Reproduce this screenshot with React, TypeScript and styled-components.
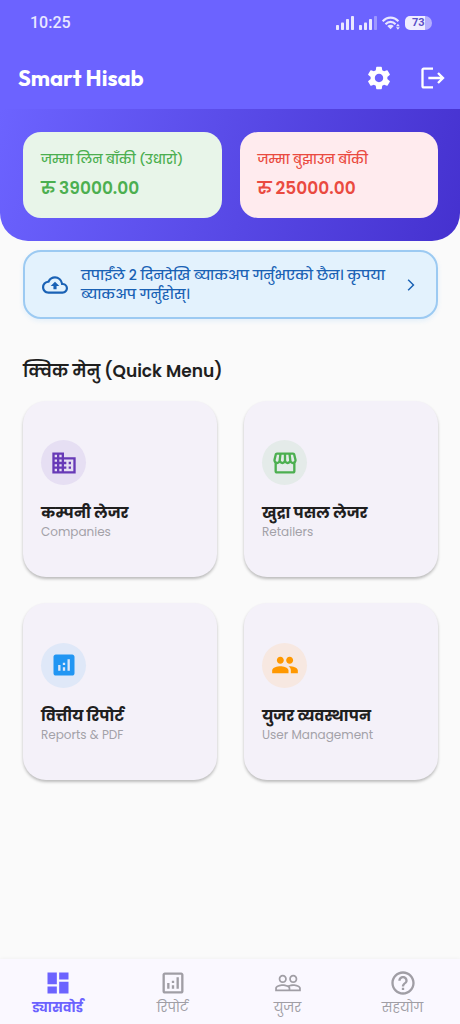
import React from "react";
import styled, { createGlobalStyle } from "styled-components";
import {
  MdAnalytics,
  MdArrowForwardIos,
  MdBusiness,
  MdDashboard,
  MdHelpOutline,
  MdLogout,
  MdOutlineAnalytics,
  MdOutlineBackup,
  MdOutlineStorefront,
  MdPeople,
  MdPeopleOutline,
  MdSettings,
} from "react-icons/md";

const GlobalStyle = createGlobalStyle`
  *, *::before, *::after { box-sizing: border-box; }
  body {
    margin: 0;
    background: #fafafa;
    font-family: Poppins, "Noto Sans", "Noto Sans Devanagari", sans-serif;
    color: #1f1f1f;
  }
  button { font: inherit; color: inherit; border: 0; padding: 0; cursor: pointer; }
  svg { display: block; flex: none; }
`;

const Page = styled.div`
  min-height: 100vh;
  display: flex;
  flex-direction: column;
`;

const TopArea = styled.header`
  background: #6c63ff;
  color: #fff;
`;

const StatusBar = styled.div`
  height: 46px;
  padding: 0 28px 0 30px;
  display: flex;
  align-items: center;
  justify-content: space-between;
  font: 500 16px/20px Roboto, sans-serif;
  color: #e9e7ff;
`;

const StatusIcons = styled.div`
  display: flex;
  align-items: center;
  gap: 5px;
`;

const Battery = styled.span`
  width: 27px;
  height: 14px;
  border-radius: 5px 7px 7px 5px;
  background: linear-gradient(90deg, #efedff 20px, #b4aeff 20px);
  color: #5a50c8;
  font: 700 11px/14px Roboto, sans-serif;
  padding-left: 7px;
`;

const AppBar = styled.div`
  height: 63px;
  padding: 0 13px 0 18px;
  display: flex;
  align-items: center;
  justify-content: space-between;
`;

const AppTitle = styled.h1`
  margin: 0;
  font: 700 22px/28px Outfit, Lato, sans-serif;
`;

const Actions = styled.div`
  display: flex;
  gap: 26px;
`;

const IconButton = styled.button`
  background: none;
`;

const Summary = styled.section`
  display: grid;
  grid-template-columns: 1fr 1fr;
  gap: 18px;
  padding: 23px 22px 23px 23px;
  border-radius: 0 0 28px 28px;
  background: linear-gradient(106deg, #6c63ff, #4531cf);
`;

const Balance = styled.div<{ $bg: string; $fg: string }>`
  height: 86px;
  padding: 17px 18px;
  border-radius: 18px;
  background: ${(p) => p.$bg};
  color: ${(p) => p.$fg};
`;

const BalanceLabel = styled.div`
  font-size: 13px;
  font-weight: 500;
  line-height: 22px;
  white-space: nowrap;
`;

const BalanceValue = styled.div`
  margin-top: 4px;
  font-size: 17px;
  font-weight: 600;
  line-height: 26px;
`;

const Main = styled.main`
  flex: 1;
  padding: 9px 22px 24px 23px;
`;

const Notice = styled.button`
  width: 100%;
  display: flex;
  align-items: center;
  gap: 13px;
  min-height: 69px;
  padding: 0 18px 0 17px;
  border: 2px solid #9ccaf2;
  border-radius: 18px;
  background: #e3f2fd;
  color: #1a62b5;
  text-align: left;
  box-shadow: 0 2px 5px rgba(33, 150, 243, 0.1);
`;

const NoticeText = styled.span`
  flex: 1;
  font-size: 14px;
  font-weight: 500;
  line-height: 19px;
`;

const SectionTitle = styled.h2`
  margin: 39px 0 16px;
  font-size: 17px;
  font-weight: 600;
  line-height: 27px;
`;

const MenuGrid = styled.div`
  display: grid;
  grid-template-columns: 1fr 1fr;
  gap: 26px 27px;
`;

const MenuCard = styled.button`
  aspect-ratio: 11 / 10;
  padding: 2px 18px 0;
  display: flex;
  flex-direction: column;
  align-items: flex-start;
  justify-content: center;
  border-radius: 23px;
  background: #f4f1f9;
  text-align: left;
  box-shadow: 0 2px 3px rgba(0, 0, 0, 0.25);
`;

const Badge = styled.span<{ $bg: string; $fg: string }>`
  width: 45px;
  height: 45px;
  margin-bottom: 17px;
  border-radius: 50%;
  display: grid;
  place-items: center;
  background: ${(p) => p.$bg};
  color: ${(p) => p.$fg};
`;

const CardTitle = styled.span`
  font-size: 15px;
  font-weight: 700;
  line-height: 22px;
  white-space: nowrap;
`;

const CardSubtitle = styled.span`
  font-size: 12px;
  line-height: 16px;
  color: #a3a1a8;
`;

const BottomNav = styled.nav`
  position: sticky;
  bottom: 0;
  display: grid;
  grid-template-columns: repeat(4, 1fr);
  height: 65px;
  background: #faf8ff;
  box-shadow: 0 -1px 3px rgba(0, 0, 0, 0.03);
`;

const NavItem = styled.a<{ $active?: boolean }>`
  display: flex;
  flex-direction: column;
  align-items: center;
  padding-top: 10px;
  color: ${(p) => (p.$active ? "#6c63ff" : "#a09ea5")};
  font-size: 13px;
  font-weight: ${(p) => (p.$active ? 700 : 400)};
  line-height: 22px;
  text-decoration: none;
`;

function Signal({ weak }: { weak?: boolean }) {
  return (
    <svg width="18" height="14" viewBox="0 0 18 14" fill="currentColor" aria-hidden="true">
      <rect x="0" y="9" width="3" height="5" rx="0.8" />
      <rect x="5" y="6.5" width="3" height="7.5" rx="0.8" />
      <rect x="10" y="3" width="3" height="11" rx="0.8" />
      <rect x="15" y="0" width="3" height="14" rx="0.8" opacity={weak ? 0.4 : 1} />
    </svg>
  );
}

function Wifi() {
  return (
    <svg width="18" height="14" viewBox="0 0 19 14" fill="none" stroke="currentColor" strokeWidth="2.2" aria-hidden="true">
      <path d="M0.7 5.2C5.4 0 12.6 0 17.3 5.2" />
      <path d="M3.7 8.3C6.7 5 11.3 5 14.3 8.3" />
      <path d="M9 13.6L5.6 10.2C7.5 8.3 10.5 8.3 12.4 10.2Z" fill="currentColor" stroke="none" />
      <path d="M16.8 7.8L18.8 10.3H14.8ZM16.8 14L14.8 11.5H18.8Z" fill="currentColor" stroke="none" />
    </svg>
  );
}

const menu = [
  { title: "कम्पनी लेजर", subtitle: "Companies", Icon: MdBusiness, fg: "#673ab7", bg: "#e6dff3" },
  { title: "खुद्रा पसल लेजर", subtitle: "Retailers", Icon: MdOutlineStorefront, fg: "#4caf50", bg: "#e4ebe9" },
  { title: "वित्तीय रिपोर्ट", subtitle: "Reports & PDF", Icon: MdAnalytics, fg: "#2196f3", bg: "#dfe8f8" },
  { title: "युजर व्यवस्थापन", subtitle: "User Management", Icon: MdPeople, fg: "#ff9800", bg: "#f7e8e1" },
];

const tabs = [
  { label: "ड्यासवोर्ड", Icon: MdDashboard, active: true },
  { label: "रिपोर्ट", Icon: MdOutlineAnalytics },
  { label: "युजर", Icon: MdPeopleOutline },
  { label: "सहयोग", Icon: MdHelpOutline },
];

export default function App() {
  return (
    <Page lang="ne">
      <GlobalStyle />
      <TopArea>
        <StatusBar>
          <span>10:25</span>
          <StatusIcons>
            <Signal />
            <Signal weak />
            <Wifi />
            <Battery>73</Battery>
          </StatusIcons>
        </StatusBar>
        <AppBar>
          <AppTitle>Smart Hisab</AppTitle>
          <Actions>
            <IconButton aria-label="Settings"><MdSettings size={28} /></IconButton>
            <IconButton aria-label="Log out"><MdLogout size={28} /></IconButton>
          </Actions>
        </AppBar>
      </TopArea>
      <Summary>
        <Balance $bg="#e8f5e9" $fg="#4caf50">
          <BalanceLabel>जम्मा लिन बाँकी (उधारो)</BalanceLabel>
          <BalanceValue>रु 39000.00</BalanceValue>
        </Balance>
        <Balance $bg="#ffebee" $fg="#ea4a40">
          <BalanceLabel>जम्मा बुझाउन बाँकी</BalanceLabel>
          <BalanceValue>रु 25000.00</BalanceValue>
        </Balance>
      </Summary>
      <Main>
        <Notice>
          <MdOutlineBackup size={26} />
          <NoticeText>तपाईंले 2 दिनदेखि ब्याकअप गर्नुभएको छैन। कृपया ब्याकअप गर्नुहोस्।</NoticeText>
          <MdArrowForwardIos size={14} />
        </Notice>
        <SectionTitle>क्विक मेनु (Quick Menu)</SectionTitle>
        <MenuGrid>
          {menu.map(({ title, subtitle, Icon, fg, bg }) => (
            <MenuCard key={subtitle}>
              <Badge $bg={bg} $fg={fg}><Icon size={28} /></Badge>
              <CardTitle>{title}</CardTitle>
              <CardSubtitle>{subtitle}</CardSubtitle>
            </MenuCard>
          ))}
        </MenuGrid>
      </Main>
      <BottomNav>
        {tabs.map(({ label, Icon, active }) => (
          <NavItem key={label} href="#" $active={active} aria-current={active ? "page" : undefined}>
            <Icon size={28} />
            {label}
          </NavItem>
        ))}
      </BottomNav>
    </Page>
  );
}
